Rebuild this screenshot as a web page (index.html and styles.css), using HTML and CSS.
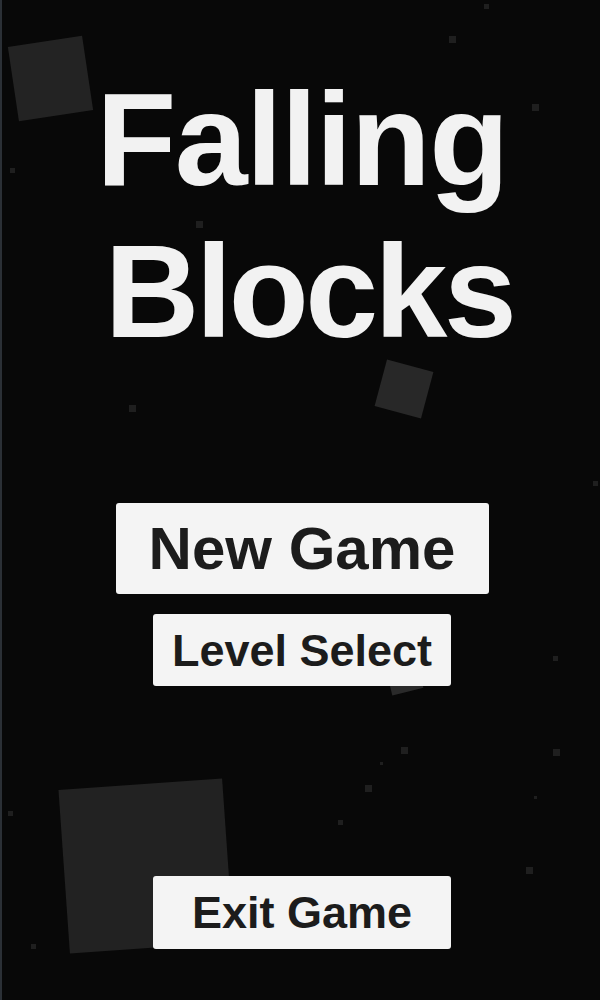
FILE: index.html
```html
<!DOCTYPE html>
<html>
<head>
<meta charset="utf-8">
<link rel="stylesheet" href="styles.css">
</head>
<body>
<div class="screen">
  <div class="block b1"></div>
  <div class="block b2"></div>
  <div class="block b3"></div>
  <div class="block b4"></div>
  <span class="dot" style="left:447px;top:36px"></span>
  <span class="dot" style="left:530px;top:104px"></span>
  <span class="dot small" style="left:482px;top:4px"></span>
  <span class="dot small" style="left:8px;top:168px"></span>
  <span class="dot" style="left:194px;top:221px"></span>
  <span class="dot" style="left:127px;top:405px"></span>
  <span class="dot small" style="left:591px;top:481px"></span>
  <span class="dot small" style="left:551px;top:656px"></span>
  <span class="dot" style="left:399px;top:747px"></span>
  <span class="dot" style="left:551px;top:749px"></span>
  <span class="dot" style="left:363px;top:785px"></span>
  <span class="dot small" style="left:336px;top:820px"></span>
  <span class="dot" style="left:524px;top:867px"></span>
  <span class="dot small" style="left:6px;top:811px"></span>
  <span class="dot small" style="left:29px;top:944px"></span>
  <span class="dot tiny" style="left:378px;top:762px"></span>
  <span class="dot tiny" style="left:532px;top:796px"></span>

  <main class="menu">
    <h1 class="title"><span class="line line1">Falling</span><span class="line line2">Blocks</span></h1>
    <button class="btn btn-large">New Game</button>
    <button class="btn btn-level">Level Select</button>
    <button class="btn btn-exit">Exit Game</button>
  </main>
</div>
</body>
</html>
```

FILE: styles.css
```css
html, body {
  margin: 0;
  padding: 0;
  background: #080808;
}

.screen {
  position: relative;
  width: 600px;
  height: 1000px;
  overflow: hidden;
  background: #080808;
  border-left: 2px solid #2b3036;
  box-sizing: border-box;
  font-family: "Liberation Sans", Arial, sans-serif;
}

.block {
  position: absolute;
  background: #232323;
}

.b1 {
  left: 11px;
  top: 41px;
  width: 75px;
  height: 75px;
  transform: rotate(-8.5deg);
}

.b2 {
  left: 378px;
  top: 365px;
  width: 48px;
  height: 48px;
  background: #282828;
  transform: rotate(15deg);
}

.b3 {
  left: 62px;
  top: 784px;
  width: 164px;
  height: 164px;
  background: #222222;
  transform: rotate(-4deg);
}

.b4 {
  left: 386px;
  top: 660px;
  width: 32px;
  height: 32px;
  background: #2a2a2a;
  transform: rotate(-14deg);
}

.dot {
  position: absolute;
  width: 7px;
  height: 7px;
  background: #1f1f1f;
}

.dot.small {
  width: 5px;
  height: 5px;
}

.dot.tiny {
  width: 3px;
  height: 3px;
}

.menu {
  position: relative;
  z-index: 1;
  display: flex;
  flex-direction: column;
  align-items: center;
  padding-top: 64px;
  padding-left: 2px;
}

.title {
  margin: 0;
  display: flex;
  flex-direction: column;
  align-items: center;
  font-size: 131px;
  line-height: 152px;
  font-weight: bold;
  color: #f2f2f2;
  text-align: center;
}

.line1 {
  letter-spacing: -1.5px;
}

.line2 {
  letter-spacing: -3.5px;
  margin-left: 14px;
}

.btn {
  display: flex;
  align-items: center;
  justify-content: center;
  border: none;
  border-radius: 3px;
  background: #f4f4f4;
  color: #1c1c1c;
  font-family: "Liberation Sans", Arial, sans-serif;
  font-weight: bold;
  padding: 0;
  line-height: 1;
}

.btn-large {
  margin-top: 135px;
  width: 373px;
  height: 91px;
  font-size: 60px;
}

.btn-level {
  margin-top: 20px;
  width: 298px;
  height: 72px;
  font-size: 45px;
}

.btn-exit {
  margin-top: 190px;
  width: 298px;
  height: 73px;
  font-size: 45px;
}
```
